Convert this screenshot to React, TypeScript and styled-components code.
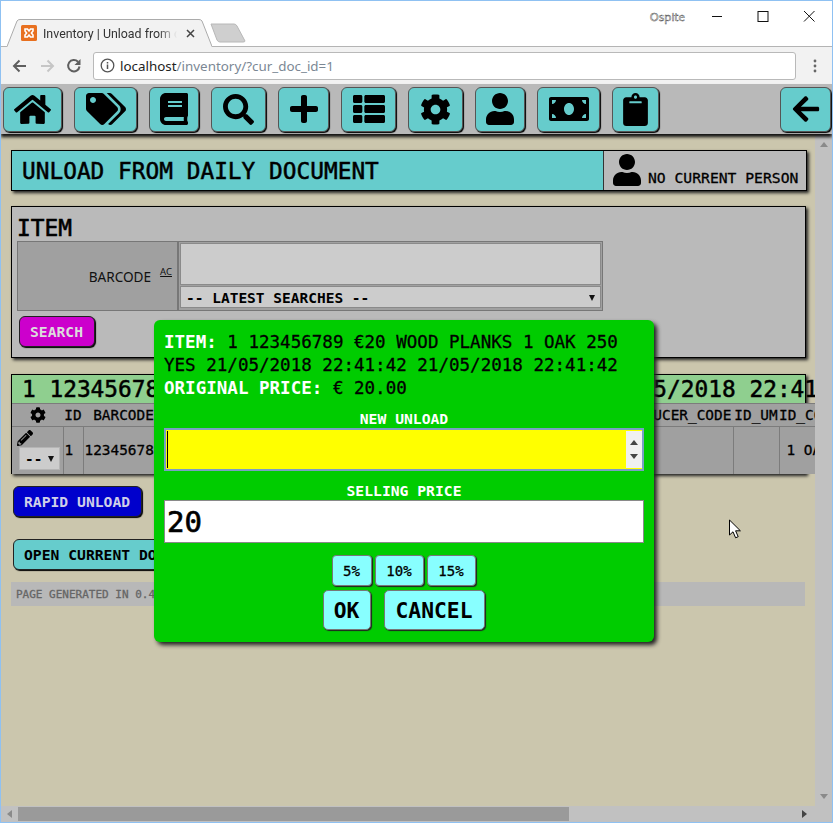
import styled, { createGlobalStyle } from 'styled-components';
import {
  FaArrowLeft,
  FaBook,
  FaClipboard,
  FaCog,
  FaHome,
  FaMoneyBill,
  FaPencilAlt,
  FaPlus,
  FaSearch,
  FaTags,
  FaThList,
  FaUser,
} from 'react-icons/fa';
import type { IconType } from 'react-icons';

const MONO = '"DejaVu Sans Mono", "Liberation Mono", monospace';
const UI = '"Noto Sans", "Open Sans", sans-serif';

const GlobalStyle = createGlobalStyle`
  html, body { margin: 0; height: 100%; overflow: hidden; background: #fff; }
  * { box-sizing: border-box; }
`;

const Win = styled.div`
  position: relative;
  width: 833px;
  height: 823px;
  border: 1px solid #8fc1f2;
  display: flex;
  flex-direction: column;
  background: #fff;
  overflow: hidden;
`;

const TitleBar = styled.div`
  height: 46px;
  flex: none;
  display: flex;
  align-items: flex-end;
  padding-left: 6px;
  border-bottom: 1px solid #b4b4b4;
  position: relative;
`;

const Tab = styled.div`
  position: relative;
  width: 205px;
  height: 28px;
  margin-bottom: -1px;
  display: flex;
  align-items: center;
  padding: 0 0 0 14px;
  font: 12.4px Roboto, ${UI};
  color: #333;
`;

const TabShape = styled.svg`
  position: absolute;
  inset: 0;
`;

const TabIcon = styled.svg`
  position: relative;
  width: 16px;
  height: 16px;
  flex: none;
  margin-right: 6px;
`;

const TabText = styled.span`
  position: relative;
  width: 134px;
  white-space: nowrap;
  overflow: hidden;
  -webkit-mask-image: linear-gradient(to right, #000 86%, transparent);
  mask-image: linear-gradient(to right, #000 86%, transparent);
`;

const TabClose = styled.svg`
  position: relative;
  width: 9px;
  height: 9px;
  margin-left: 9px;
`;

const NewTab = styled.svg`
  width: 36px;
  height: 20px;
  margin: 0 0 3px -2px;
`;

const WindowControls = styled.div`
  position: absolute;
  right: 0;
  top: 0;
  height: 30px;
  display: flex;
  align-items: center;
`;

const UserName = styled.span`
  font: 11.5px ${UI};
  color: #fff;
  margin-right: 9px;
  -webkit-text-stroke: 0.45px #444;
`;

const CtlIcon = styled.svg`
  width: 46px;
  height: 30px;
`;

const AddressRow = styled.div`
  height: 37px;
  flex: none;
  background: #f2f2f2;
  display: flex;
  align-items: center;
  padding: 0 0 0 10px;
`;

const NavGlyph = styled.svg`
  width: 18px;
  height: 18px;
  margin-right: 9px;
  flex: none;
`;

const UrlBox = styled.div`
  width: 703px;
  height: 28px;
  margin-left: 1px;
  background: #fff;
  border: 1px solid #b9b9b9;
  border-radius: 3px;
  display: flex;
  align-items: center;
  padding-left: 6px;
  font: 13.4px ${UI};
  color: #7b8794;
`;

const InfoIcon = styled.svg`
  width: 15px;
  height: 15px;
  margin-right: 5px;
`;

const Host = styled.span`
  color: #222;
`;

const Dots = styled.svg`
  width: 4px;
  height: 14px;
  margin-left: 17px;
`;

const Nav = styled.div`
  position: relative;
  z-index: 1;
  height: 50px;
  flex: none;
  background: #b9b9b9;
  display: flex;
  align-items: center;
  gap: 12px;
  padding: 0 1px 0 2px;
  box-shadow: 0 3px 3px #111;
`;

const NavButton = styled.div<{ $w: number; $right?: boolean }>`
  width: ${(p) => p.$w}px;
  height: 45px;
  flex: none;
  background: #66cccc;
  border: 1px solid #555;
  border-radius: 6px;
  box-shadow: 1px 1px 1px #000;
  display: flex;
  align-items: center;
  justify-content: center;
  color: #000;
  margin-left: ${(p) => (p.$right ? 'auto' : '0')};
`;

const Viewport = styled.div`
  flex: 1;
  min-height: 0;
  display: flex;
  background: #cbc6ad;
`;

const Page = styled.div`
  flex: 1;
  min-width: 0;
  overflow: hidden;
  padding: 16px 0 0 10px;
  font-family: ${MONO};
  color: #000;
  -webkit-text-stroke: 0.3px currentColor;
`;

const VScroll = styled.div`
  width: 17px;
  flex: none;
  background: #c1c1c1;
  display: flex;
  flex-direction: column;
  justify-content: space-between;
  align-items: center;
  padding: 8px 0 7px;
`;

const Arrow = styled.div<{ $dir: 'up' | 'down' | 'left' | 'right'; $dark?: boolean }>`
  width: 0;
  height: 0;
  border: 4px solid transparent;
  ${(p) => {
    const c = p.$dark ? '#444' : '#8a8a8a';
    if (p.$dir === 'up') return `border-bottom: 5px solid ${c}; border-top-width: 0;`;
    if (p.$dir === 'down') return `border-top: 5px solid ${c}; border-bottom-width: 0;`;
    if (p.$dir === 'left') return `border-right: 5px solid ${c}; border-left-width: 0;`;
    return `border-left: 5px solid ${c}; border-right-width: 0;`;
  }}
`;

const HScroll = styled.div`
  height: 16px;
  flex: none;
  background: #c1c1c1;
  display: flex;
  align-items: center;
  padding: 0 25px 0 6px;
`;

const HThumb = styled.div`
  width: 551px;
  height: 14px;
  margin-left: 6px;
  background: #9a9a9a;
`;

const HSpacer = styled.div`
  flex: 1;
`;

const HeadBar = styled.div`
  width: 796px;
  height: 41px;
  display: flex;
  border: 1px solid #000;
  box-shadow: 2px 2px 3px #222;
  background: #66cccc;
`;

const HeadTitle = styled.div`
  flex: 1;
  font-size: 22.8px;
  line-height: 41px;
  padding-left: 10px;
  -webkit-text-stroke: 0.5px #000;
`;

const PersonBox = styled.div`
  width: 203px;
  background: #bababa;
  border-left: 1px solid #333;
  display: flex;
  align-items: flex-end;
  padding: 0 0 4px 7px;
  font-size: 14.7px;
  gap: 5px;
`;

const ItemPanel = styled.div`
  position: relative;
  width: 795px;
  height: 152px;
  margin-top: 15px;
  background: #bababa;
  border: 1px solid #000;
  box-shadow: 2px 2px 3px #222;
  padding: 6px 5px 0;
`;

const PanelHeading = styled.div`
  font-size: 22.8px;
  line-height: 28px;
  padding-top: 1px;
  height: 28px;
  -webkit-text-stroke: 0.6px #000;
`;

const FormRow = styled.div`
  display: flex;
  width: 586px;
  height: 70px;
`;

const FormLabel = styled.div`
  width: 161px;
  background: #a0a0a0;
  border: 1px solid #777;
  display: flex;
  align-items: center;
  justify-content: flex-end;
  padding: 0 5px 0 0;
  font: 13.6px ${UI};
  color: #111;
  -webkit-text-stroke: 0;
`;

const AcMark = styled.span`
  font-size: 9.5px;
  text-decoration: underline;
  margin: -9px 0 0 9px;
`;

const FormField = styled.div`
  flex: 1;
  background: #a0a0a0;
  border: 1px solid #777;
  padding: 1px 1px 2px;
  display: flex;
  flex-direction: column;
  gap: 1px;
`;

const TextBox = styled.div`
  flex: 1;
  background: #cccccc;
  border: 1px solid #8a8a8a;
`;

const SearchSelect = styled.div`
  height: 22px;
  background: #cccccc;
  border: 1px solid #8a8a8a;
  display: flex;
  align-items: center;
  justify-content: space-between;
  padding: 1px 5px 0 5px;
  font-size: 14.5px;
  font-weight: 700;
  white-space: nowrap;
  -webkit-text-stroke: 0;
`;

const ActionButton = styled.div<{ $bg: string; $fg: string; $w: number; $h: number }>`
  width: ${(p) => p.$w}px;
  height: ${(p) => p.$h}px;
  background: ${(p) => p.$bg};
  color: ${(p) => p.$fg};
  border: 1px solid #222;
  border-radius: 6px;
  box-shadow: 1px 1px 1px #000;
  font-size: 14.7px;
  font-weight: 700;
  display: flex;
  align-items: center;
  padding-left: 10px;
  white-space: nowrap;
  overflow: hidden;
  -webkit-text-stroke: 0;
`;

const SearchWrap = styled.div`
  margin: 5px 0 0 2px;
`;

const TableBox = styled.div`
  position: relative;
  width: 795px;
  height: 100px;
  margin-top: 16px;
  border: 1px solid #000;
  box-shadow: 2px 2px 3px #222;
  background: #a0a0a0;
`;

const TableTitle = styled.div`
  height: 28px;
  background: #8fcf8f;
  font-size: 22.8px;
  line-height: 29px;
  padding-left: 10px;
  white-space: nowrap;
  -webkit-text-stroke: 0.5px #000;
`;

const Grid = styled.table`
  table-layout: fixed;
  border-collapse: collapse;
  width: 855px;
  font-size: 14.4px;
`;

const HeadCell = styled.th`
  height: 23px;
  padding: 0;
  font-weight: 400;
  background: #a0a0a0;
  border: 1px solid #7c7c7c;
  border-width: 1px 0 1px 0;
  white-space: nowrap;
  overflow: hidden;
`;

const HeadText = styled.div<{ $align: string }>`
  display: flex;
  justify-content: ${(p) => p.$align};
`;

const BodyCell = styled.td<{ $pad?: number }>`
  height: 47px;
  padding: 0 1px 0 ${(p) => p.$pad ?? 1}px;
  background: #a0a0a0;
  border-right: 1px solid #7c7c7c;
  white-space: nowrap;
  overflow: hidden;
`;

const ActionCell = styled.div`
  display: flex;
  flex-direction: column;
  align-items: flex-start;
  padding-left: 4px;
  gap: 1px;
`;

const MiniSelect = styled.div`
  width: 41px;
  height: 23px;
  margin-left: 2px;
  background: #cccccc;
  border: 1px solid #b5b5b5;
  display: flex;
  align-items: center;
  justify-content: space-between;
  padding: 0 5px;
  font-weight: 700;
  font-size: 14.4px;
  -webkit-text-stroke: 0;
`;

const Caret = styled.div`
  width: 0;
  height: 0;
  border: 3.5px solid transparent;
  border-top: 6px solid #111;
  border-bottom-width: 0;
`;

const RapidWrap = styled.div`
  margin: 12px 0 0 2px;
`;

const OpenWrap = styled.div`
  margin: 22px 0 0 2px;
`;

const Footer = styled.div`
  width: 794px;
  height: 24px;
  margin-top: 12px;
  background: #b8b8b8;
  color: #666;
  font-size: 11px;
  line-height: 25px;
  padding-left: 5px;
`;

const Modal = styled.div`
  position: absolute;
  left: 153px;
  top: 319px;
  width: 500px;
  height: 322px;
  z-index: 5;
  background: #00cc00;
  border-radius: 6px;
  box-shadow: 3px 3px 4px #222;
  padding: 11px 10px 10px;
  font-family: ${MONO};
  color: #000;
  -webkit-text-stroke: 0.3px currentColor;
`;

const ModalInfo = styled.div`
  font-size: 17.55px;
  line-height: 23px;
  white-space: nowrap;
`;

const Strong = styled.b`
  color: #fff;
  -webkit-text-stroke: 0;
`;

const FieldLabel = styled.div<{ $top: number }>`
  margin-top: ${(p) => p.$top}px;
  text-align: center;
  color: #fff;
  font-size: 14.7px;
  line-height: 17px;
  font-weight: 700;
  -webkit-text-stroke: 0;
`;

const QtyInput = styled.div`
  height: 43px;
  margin-top: 1px;
  background: #ffff00;
  border: 2px solid #7a9fc4;
  display: flex;
  align-items: stretch;
  justify-content: space-between;
  padding: 1px 0 1px 1px;
`;

const Cursor = styled.div`
  width: 1px;
  background: #000;
`;

const Spinner = styled.div`
  width: 16px;
  background: #f0f0f0;
  display: flex;
  flex-direction: column;
  align-items: center;
  justify-content: space-evenly;
`;

const PriceInput = styled.div`
  height: 43px;
  margin-top: 1px;
  background: #fff;
  border: 1px solid #8a8a8a;
  padding-left: 2px;
  font-size: 29px;
  line-height: 42px;
  -webkit-text-stroke: 0.7px #000;
`;

const QuickRow = styled.div`
  display: flex;
  justify-content: center;
  gap: 3px;
  margin-top: 12px;
  padding-right: 1px;
`;

const Quick = styled.div<{ $w: number }>`
  width: ${(p) => p.$w}px;
  height: 31px;
  background: #88ffff;
  border: 1px solid #777;
  border-radius: 4px;
  box-shadow: 1px 1px 1px #222;
  display: flex;
  align-items: center;
  justify-content: center;
  font-size: 14px;
`;

const ConfirmRow = styled.div`
  display: flex;
  justify-content: center;
  gap: 13px;
  margin-top: 4px;
  padding-right: 1px;
`;

const Confirm = styled.div<{ $w: number }>`
  width: ${(p) => p.$w}px;
  height: 40px;
  background: #88ffff;
  border: 1px solid #777;
  border-radius: 5px;
  box-shadow: 1px 1px 1px #222;
  display: flex;
  align-items: center;
  justify-content: center;
  font-size: 21.3px;
  font-weight: 700;
  -webkit-text-stroke: 0;
`;

const Pointer = styled.svg`
  position: absolute;
  left: 727px;
  top: 518px;
  width: 14px;
  height: 21px;
  z-index: 4;
`;

const NAV_ITEMS: { name: string; icon: IconType; w: number; size: number }[] = [
  { name: 'home', icon: FaHome, w: 59, size: 37 },
  { name: 'tags', icon: FaTags, w: 63, size: 40 },
  { name: 'book', icon: FaBook, w: 50, size: 32 },
  { name: 'search', icon: FaSearch, w: 55, size: 31 },
  { name: 'plus', icon: FaPlus, w: 51, size: 32 },
  { name: 'list', icon: FaThList, w: 55, size: 32 },
  { name: 'cog', icon: FaCog, w: 55, size: 31 },
  { name: 'user', icon: FaUser, w: 50, size: 32 },
  { name: 'money', icon: FaMoneyBill, w: 63, size: 40 },
  { name: 'clipboard', icon: FaClipboard, w: 47, size: 33 },
];

const COLUMNS: { label: string; w: number }[] = [
  { label: 'ID', w: 20 },
  { label: 'BARCODE', w: 81 },
  { label: 'PRICE_SELL', w: 150 },
  { label: 'DESCRIPTION', w: 150 },
  { label: 'PRODUCER', w: 153 },
  { label: 'PRODUCER_CODE', w: 116 },
  { label: 'ID_UM', w: 46 },
  { label: 'ID_COLOR', w: 88 },
];

const ITEM_LINE = '1 123456789 €20 WOOD PLANKS 1 OAK 250';
const DATE_LINE = 'YES 21/05/2018 22:41:42 21/05/2018 22:41:42';

export default function App() {
  return (
    <Win>
      <GlobalStyle />
      <TitleBar>
        <Tab>
          <TabShape width="205" height="28" viewBox="0 0 205 28">
            <path d="M0 28 L10 2 Q11 0 13 0 H192 Q194 0 195 2 L205 28 Z" fill="#f2f2f2" />
            <path d="M0 27.5 L10 2 Q11 .5 13 .5 H192 Q194 .5 195 2 L205 27.5" fill="none" stroke="#ababab" />
          </TabShape>
          <TabIcon viewBox="0 0 16 16">
            <rect width="16" height="16" rx="1.5" fill="#e8701f" />
            <path
              d="M4 4h2.5l1.5 2 1.5-2H12v2l-1.6 2L12 10v2H9.5L8 10l-1.5 2H4v-2l1.6-2L4 6z"
              fill="none"
              stroke="#fff"
              strokeWidth="1.6"
            />
          </TabIcon>
          <TabText>Inventory | Unload from cur</TabText>
          <TabClose viewBox="0 0 9 9">
            <path d="M1 1l7 7M8 1L1 8" stroke="#444" strokeWidth="1.5" />
          </TabClose>
        </Tab>
        <NewTab viewBox="0 0 36 20">
          <path d="M1 1 H24 Q26 1 27 3 L35 18 Q35 19 33 19 H10 Q8 19 7 17 Z" fill="#cfcfcf" stroke="#b8b8b8" />
        </NewTab>
        <WindowControls>
          <UserName>Ospite</UserName>
          <CtlIcon viewBox="0 0 46 30">
            <path d="M18 15.5h10" stroke="#111" />
          </CtlIcon>
          <CtlIcon viewBox="0 0 46 30">
            <rect x="18" y="10.5" width="10" height="10" fill="none" stroke="#111" />
          </CtlIcon>
          <CtlIcon viewBox="0 0 46 30">
            <path d="M18 10l10.5 10.5M28.5 10L18 20.5" stroke="#111" />
          </CtlIcon>
        </WindowControls>
      </TitleBar>
      <AddressRow>
        <NavGlyph viewBox="0 0 18 18">
          <path d="M15 9H3M8.5 3.5L3 9l5.5 5.5" fill="none" stroke="#5f5f5f" strokeWidth="2" />
        </NavGlyph>
        <NavGlyph viewBox="0 0 18 18">
          <path d="M3 9h12M9.5 3.5L15 9l-5.5 5.5" fill="none" stroke="#c6c6c6" strokeWidth="2" />
        </NavGlyph>
        <NavGlyph viewBox="0 0 18 18">
          <path d="M14.5 9.5A5.7 5.7 0 1 1 13 4.8" fill="none" stroke="#5f5f5f" strokeWidth="2" />
          <path d="M15.5 2v6h-6z" fill="#5f5f5f" />
        </NavGlyph>
        <UrlBox>
          <InfoIcon viewBox="0 0 15 15">
            <circle cx="7.5" cy="7.5" r="6.3" fill="none" stroke="#555" strokeWidth="1.3" />
            <path d="M7.5 6.5v4.5M7.5 4v1.6" stroke="#555" strokeWidth="1.5" />
          </InfoIcon>
          <span>
            <Host>localhost</Host>/inventory/?cur_doc_id=1
          </span>
        </UrlBox>
        <Dots viewBox="0 0 4 14">
          <circle cx="2" cy="2" r="1.4" fill="#666" />
          <circle cx="2" cy="7" r="1.4" fill="#666" />
          <circle cx="2" cy="12" r="1.4" fill="#666" />
        </Dots>
      </AddressRow>
      <Nav>
        {NAV_ITEMS.map(({ name, icon: Icon, w, size }) => (
          <NavButton key={name} $w={w}>
            <Icon size={size} />
          </NavButton>
        ))}
        <NavButton $w={51} $right>
          <FaArrowLeft size={30} />
        </NavButton>
      </Nav>
      <Viewport>
        <Page>
          <HeadBar>
            <HeadTitle>UNLOAD FROM DAILY DOCUMENT</HeadTitle>
            <PersonBox>
              <FaUser size={32} />
              <span>NO CURRENT PERSON</span>
            </PersonBox>
          </HeadBar>
          <ItemPanel>
            <PanelHeading>ITEM</PanelHeading>
            <FormRow>
              <FormLabel>
                BARCODE
                <AcMark>AC</AcMark>
              </FormLabel>
              <FormField>
                <TextBox />
                <SearchSelect>
                  -- LATEST SEARCHES --
                  <Caret />
                </SearchSelect>
              </FormField>
            </FormRow>
            <SearchWrap>
              <ActionButton $bg="#cc00cc" $fg="#dcdcdc" $w={76} $h={31}>
                SEARCH
              </ActionButton>
            </SearchWrap>
          </ItemPanel>
          <TableBox>
            <TableTitle>
              {ITEM_LINE} {DATE_LINE}
            </TableTitle>
            <Grid>
              <colgroup>
                <col style={{ width: 51 }} />
                {COLUMNS.map((c) => (
                  <col key={c.label} style={{ width: c.w }} />
                ))}
              </colgroup>
              <thead>
                <tr>
                  <HeadCell>
                    <HeadText $align="center">
                      <FaCog size={16} />
                    </HeadText>
                  </HeadCell>
                  {COLUMNS.map((c) => (
                    <HeadCell key={c.label}>
                      <HeadText $align={c.label === 'ID_COLOR' ? 'flex-start' : 'center'}>{c.label}</HeadText>
                    </HeadCell>
                  ))}
                </tr>
              </thead>
              <tbody>
                <tr>
                  <BodyCell>
                    <ActionCell>
                      <FaPencilAlt size={16} />
                      <MiniSelect>
                        --
                        <Caret />
                      </MiniSelect>
                    </ActionCell>
                  </BodyCell>
                  <BodyCell>1</BodyCell>
                  <BodyCell>123456789</BodyCell>
                  <BodyCell />
                  <BodyCell />
                  <BodyCell />
                  <BodyCell />
                  <BodyCell />
                  <BodyCell $pad={7}>1 OAK</BodyCell>
                </tr>
              </tbody>
            </Grid>
          </TableBox>
          <RapidWrap>
            <ActionButton $bg="#0000cc" $fg="#cfcfe8" $w={129} $h={31}>
              RAPID UNLOAD
            </ActionButton>
          </RapidWrap>
          <OpenWrap>
            <ActionButton $bg="#66cccc" $fg="#000" $w={240} $h={31}>
              OPEN CURRENT DOCUMENT
            </ActionButton>
          </OpenWrap>
          <Footer>PAGE GENERATED IN 0.4 SECONDS</Footer>
        </Page>
        <VScroll>
          <Arrow $dir="up" />
          <Arrow $dir="down" />
        </VScroll>
      </Viewport>
      <HScroll>
        <Arrow $dir="left" />
        <HThumb />
        <HSpacer />
        <Arrow $dir="right" $dark />
      </HScroll>
      <Modal>
        <ModalInfo>
          <Strong>ITEM:</Strong> {ITEM_LINE}
          <br />
          {DATE_LINE}
          <br />
          <Strong>ORIGINAL PRICE:</Strong> € 20.00
        </ModalInfo>
        <FieldLabel $top={10}>NEW UNLOAD</FieldLabel>
        <QtyInput>
          <Cursor />
          <Spinner>
            <Arrow $dir="up" $dark />
            <Arrow $dir="down" $dark />
          </Spinner>
        </QtyInput>
        <FieldLabel $top={11}>SELLING PRICE</FieldLabel>
        <PriceInput>20</PriceInput>
        <QuickRow>
          <Quick $w={40}>5%</Quick>
          <Quick $w={49}>10%</Quick>
          <Quick $w={49}>15%</Quick>
        </QuickRow>
        <ConfirmRow>
          <Confirm $w={48}>OK</Confirm>
          <Confirm $w={101}>CANCEL</Confirm>
        </ConfirmRow>
      </Modal>
      <Pointer viewBox="0 0 14 21">
        <path d="M1.5 1v15l3.5-3.2 2.6 6 2.6-1.1-2.6-5.9h4.8z" fill="#fff" stroke="#000" />
      </Pointer>
    </Win>
  );
}
